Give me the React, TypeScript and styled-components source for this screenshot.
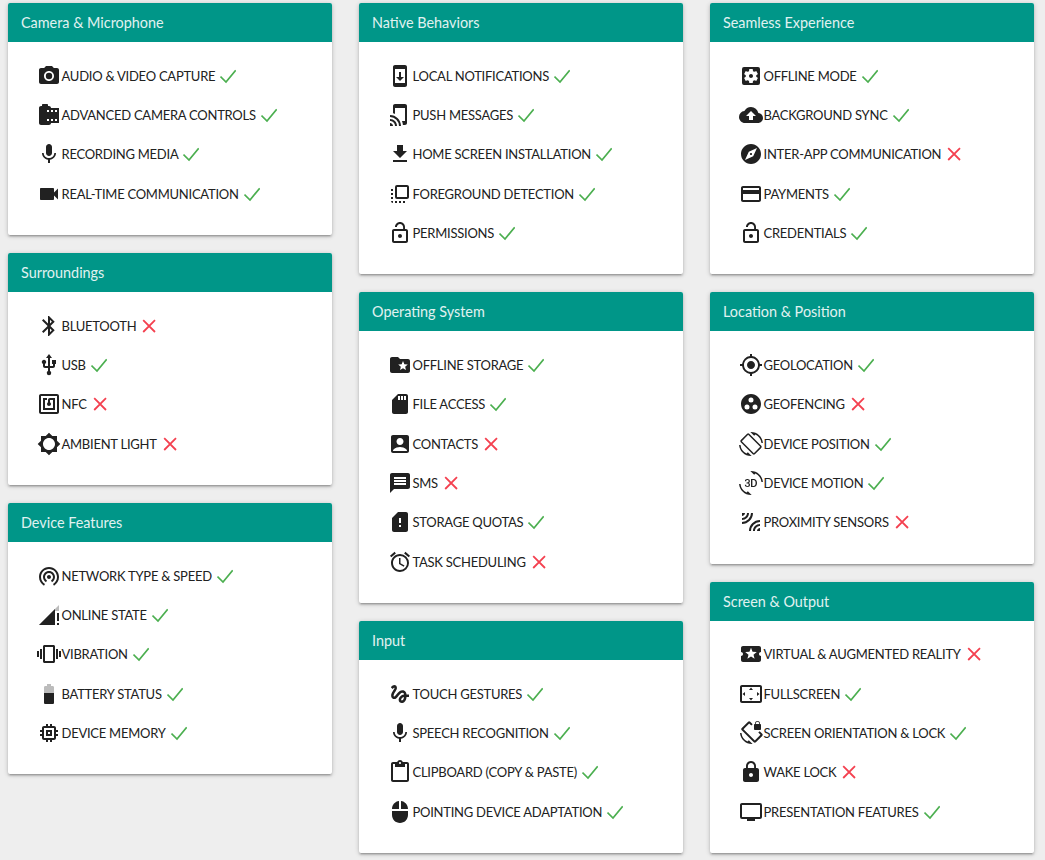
import type { ComponentType } from 'react';
import { createGlobalStyle, styled } from 'styled-components';
import {
  Md3dRotation,
  MdAccountBox,
  MdAlarm,
  MdBattery60,
  MdBluetooth,
  MdBrightness5,
  MdCameraRoll,
  MdCloudUpload,
  MdContentPaste,
  MdCreditCard,
  MdExplore,
  MdFlipToFront,
  MdFolderSpecial,
  MdGesture,
  MdGetApp,
  MdGpsFixed,
  MdGroupWork,
  MdLeakAdd,
  MdLocalPlay,
  MdLock,
  MdLockOpen,
  MdMemory,
  MdMessage,
  MdMic,
  MdMouse,
  MdNfc,
  MdPersonalVideo,
  MdPhotoCamera,
  MdScreenLockRotation,
  MdScreenRotation,
  MdSdStorage,
  MdSettingsApplications,
  MdSettingsOverscan,
  MdSignalCellularConnectedNoInternet3Bar,
  MdSimCardAlert,
  MdSystemUpdate,
  MdTapAndPlay,
  MdUsb,
  MdVibration,
  MdVideocam,
  MdWifiTethering
} from 'react-icons/md';

interface Feature {
  icon: ComponentType<{ size?: number }>;
  label: string;
  ok: boolean;
}

interface Section {
  title: string;
  features: Feature[];
}

const columns: Section[][] = [
  [
    {
      title: 'Camera & Microphone',
      features: [
        { icon: MdPhotoCamera, label: 'Audio & Video Capture', ok: true },
        { icon: MdCameraRoll, label: 'Advanced Camera Controls', ok: true },
        { icon: MdMic, label: 'Recording Media', ok: true },
        { icon: MdVideocam, label: 'Real-Time Communication', ok: true }
      ]
    },
    {
      title: 'Surroundings',
      features: [
        { icon: MdBluetooth, label: 'Bluetooth', ok: false },
        { icon: MdUsb, label: 'USB', ok: true },
        { icon: MdNfc, label: 'NFC', ok: false },
        { icon: MdBrightness5, label: 'Ambient Light', ok: false }
      ]
    },
    {
      title: 'Device Features',
      features: [
        { icon: MdWifiTethering, label: 'Network Type & Speed', ok: true },
        { icon: MdSignalCellularConnectedNoInternet3Bar, label: 'Online State', ok: true },
        { icon: MdVibration, label: 'Vibration', ok: true },
        { icon: MdBattery60, label: 'Battery Status', ok: true },
        { icon: MdMemory, label: 'Device Memory', ok: true }
      ]
    }
  ],
  [
    {
      title: 'Native Behaviors',
      features: [
        { icon: MdSystemUpdate, label: 'Local Notifications', ok: true },
        { icon: MdTapAndPlay, label: 'Push Messages', ok: true },
        { icon: MdGetApp, label: 'Home Screen Installation', ok: true },
        { icon: MdFlipToFront, label: 'Foreground Detection', ok: true },
        { icon: MdLockOpen, label: 'Permissions', ok: true }
      ]
    },
    {
      title: 'Operating System',
      features: [
        { icon: MdFolderSpecial, label: 'Offline Storage', ok: true },
        { icon: MdSdStorage, label: 'File Access', ok: true },
        { icon: MdAccountBox, label: 'Contacts', ok: false },
        { icon: MdMessage, label: 'SMS', ok: false },
        { icon: MdSimCardAlert, label: 'Storage Quotas', ok: true },
        { icon: MdAlarm, label: 'Task Scheduling', ok: false }
      ]
    },
    {
      title: 'Input',
      features: [
        { icon: MdGesture, label: 'Touch Gestures', ok: true },
        { icon: MdMic, label: 'Speech Recognition', ok: true },
        { icon: MdContentPaste, label: 'Clipboard (Copy & Paste)', ok: true },
        { icon: MdMouse, label: 'Pointing Device Adaptation', ok: true }
      ]
    }
  ],
  [
    {
      title: 'Seamless Experience',
      features: [
        { icon: MdSettingsApplications, label: 'Offline Mode', ok: true },
        { icon: MdCloudUpload, label: 'Background Sync', ok: true },
        { icon: MdExplore, label: 'Inter-App Communication', ok: false },
        { icon: MdCreditCard, label: 'Payments', ok: true },
        { icon: MdLockOpen, label: 'Credentials', ok: true }
      ]
    },
    {
      title: 'Location & Position',
      features: [
        { icon: MdGpsFixed, label: 'Geolocation', ok: true },
        { icon: MdGroupWork, label: 'Geofencing', ok: false },
        { icon: MdScreenRotation, label: 'Device Position', ok: true },
        { icon: Md3dRotation, label: 'Device Motion', ok: true },
        { icon: MdLeakAdd, label: 'Proximity Sensors', ok: false }
      ]
    },
    {
      title: 'Screen & Output',
      features: [
        { icon: MdLocalPlay, label: 'Virtual & Augmented Reality', ok: false },
        { icon: MdSettingsOverscan, label: 'Fullscreen', ok: true },
        { icon: MdScreenLockRotation, label: 'Screen Orientation & Lock', ok: true },
        { icon: MdLock, label: 'Wake Lock', ok: false },
        { icon: MdPersonalVideo, label: 'Presentation Features', ok: true }
      ]
    }
  ]
];

const StatusMark = ({ ok }: { ok: boolean }) => (
  <Mark viewBox="0 0 16 16" $ok={ok}>
    {ok ? <path d="M.5 8.6 6 14 15.7 2.2" /> : <path d="M2.2 2.2 14 14M14 2.2 2.2 14" />}
  </Mark>
);

const App = () => (
  <>
    <GlobalStyle />
    <Page>
      {columns.map((sections) => (
        <Column key={sections[0].title}>
          {sections.map((section) => (
            <Card key={section.title}>
              <CardTitle>{section.title}</CardTitle>
              <FeatureList>
                {section.features.map(({ icon: Icon, label, ok }) => (
                  <FeatureRow key={label}>
                    <Icon size={24} />
                    <FeatureLabel>{label}</FeatureLabel>
                    <StatusMark ok={ok} />
                  </FeatureRow>
                ))}
              </FeatureList>
            </Card>
          ))}
        </Column>
      ))}
    </Page>
  </>
);

export default App;

const GlobalStyle = createGlobalStyle`
  html, body {
    margin: 0;
    background: #eeeeee;
    font-family: 'Lato', sans-serif;
  }
`;

const Page = styled.div`
  display: flex;
  gap: 27px;
  padding: 3px 11px 7px 8px;
  align-items: flex-start;
`;

const Column = styled.div`
  display: flex;
  flex-direction: column;
  gap: 18px;
  width: 324px;
`;

const Card = styled.section`
  background: #fff;
  border-radius: 2px;
  overflow: hidden;
  box-shadow: 0 2px 2px rgba(0, 0, 0, 0.14), 0 3px 1px -2px rgba(0, 0, 0, 0.12), 0 1px 5px rgba(0, 0, 0, 0.2);
`;

const CardTitle = styled.h2`
  margin: 0;
  height: 39px;
  padding: 0 13px;
  display: flex;
  align-items: center;
  background: #009688;
  color: #e0f2f1;
  font-size: 14.4px;
  font-weight: 400;
`;

const FeatureList = styled.ul`
  list-style: none;
  margin: 0;
  padding: 14.15px 0 21.52px 29px;
`;

const FeatureRow = styled.li`
  display: flex;
  align-items: center;
  height: 39.33px;
  color: #212121;
  svg {
    flex: none;
  }
`;

const FeatureLabel = styled.span`
  padding-left: 0.5px;
  font-size: 13px;
  letter-spacing: -0.25px;
  text-transform: uppercase;
  white-space: nowrap;
`;

const Mark = styled.svg<{ $ok: boolean }>`
  width: 16px;
  height: 16px;
  margin-left: 5px;
  fill: none;
  stroke: ${({ $ok }) => ($ok ? '#4caf50' : '#f44150')};
  stroke-width: ${({ $ok }) => ($ok ? 1.7 : 1.8)};
`;
